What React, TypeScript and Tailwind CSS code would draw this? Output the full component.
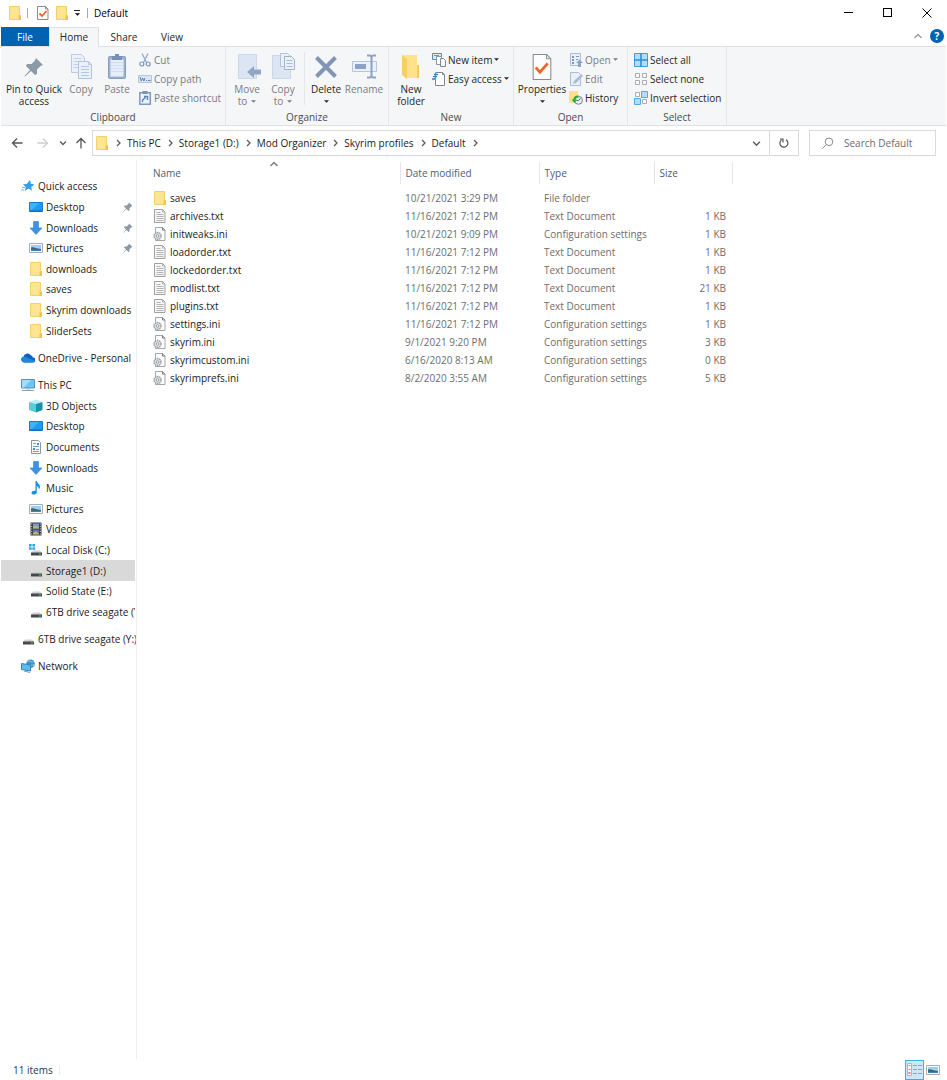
import React from 'react'

type IconProps = { className?: string }

/* ---------- Shared icons ---------- */

function Folder({ className = 'w-3.5 h-3.5' }: IconProps) {
  return (
    <svg viewBox="0 0 14 14" className={`${className} shrink-0`} aria-hidden="true">
      <path d="M1.5.5h10v9h1v4h-11z" fill="#ffe591" stroke="#f3d06c" />
      <path d="M10.5 9.5h2.5V14h-2.5z" fill="#f0c34b" />
    </svg>
  )
}

function CheckDoc({ className = 'w-7 h-7' }: IconProps) {
  return (
    <svg viewBox="4 0 20 27" className={className} aria-hidden="true">
      <path d="M5.5 1.5h13l4 4v20h-17z" fill="#fdfdfd" stroke="#8b8b8b" />
      <path d="M18.5 1.5v4h4" fill="none" stroke="#8b8b8b" />
      <path d="M8 14l4 4.500 7.500-8.500" fill="none" stroke="#ee6429" strokeWidth="2.600" />
    </svg>
  )
}

function SmallCheckDoc() {
  return (
    <svg viewBox="0 0 14 14" className="w-3.5 h-3.5" aria-hidden="true">
      <path d="M1.500.5h8l2.500 2.500v10.500H1.500z" fill="#fdfdfd" stroke="#8b8b8b" />
      <path d="M9.500.5V3H12" fill="none" stroke="#8b8b8b" />
      <path d="M3.500 7.500l2.500 2.500 4.500-5" fill="none" stroke="#ee6429" strokeWidth="1.800" />
    </svg>
  )
}

function Pin({ className = 'w-2.5 h-2.5', fill = '#8c9aa6' }: IconProps & { fill?: string }) {
  return (
    <svg viewBox="0 0 20 20" className={className} aria-hidden="true">
      <path d="M12 1l7 7-2.500 1-3.500 3.500 0 4.500-2 1-4-4-6 5.500-.5-.5L6 13 2 9l1-2h4.500L11 3.500z" fill={fill} />
    </svg>
  )
}

function Chevron({ className = 'w-[18px] h-2', dir = 'right' }: IconProps & { dir?: 'right' | 'down' | 'up' }) {
  const d = { right: 'M3 1l3 3-3 3', down: 'M1 2.500l3 3 3-3', up: 'M.5 6l3.500-3.500L7.500 6' }[dir]
  return (
    <svg viewBox="0 0 8 8" className={className} aria-hidden="true">
      <path d={d} fill="none" stroke="currentColor" strokeWidth="1.300" />
    </svg>
  )
}

function Caret({ className = 'w-[5px] h-[3px]' }: IconProps) {
  return (
    <svg viewBox="0 0 6 3" className={className} aria-hidden="true">
      <path d="M0 0h6L3 3z" fill="currentColor" />
    </svg>
  )
}

/* ---------- Ribbon icons ---------- */

const big = 'w-7 h-7'
const small = 'w-3.5 h-3.5 shrink-0'

const CopyIcon = () => (
  <svg viewBox="0 0 28 28" className={big}>
    <path d="M4.500 1.500h10l3 3v15h-13z" fill="#eaf1fa" stroke="#bccbe2" />
    <path d="M6.500 5.500h8M6.500 8.500h8M6.500 11.500h8M6.500 14.500h8" stroke="#c3d1e8" />
    <path d="M11.500 8.500h10l3 3v14h-13z" fill="#eaf1fa" stroke="#b1c2dd" />
    <path d="M21.500 8.500v3h3M14 13.500h8M14 16.500h8M14 19.500h8M14 22.500h8" fill="none" stroke="#b6c7e1" />
  </svg>
)

const PasteIcon = () => (
  <svg viewBox="0 0 28 28" className={big}>
    <rect x="5.500" y="3.500" width="17" height="22" rx="1" fill="#9db2d3" stroke="#869dc3" />
    <path d="M7.500 6.500h13v17h-13z" fill="#e6eef9" />
    <path d="M8 9.500h12M8 12.500h12M8 15.500h12M8 18.500h12" stroke="#d0ddef" />
    <path d="M9 3h3V1h4v2h3v4H9z" fill="#7790b8" />
  </svg>
)

const CutIcon = () => (
  <svg viewBox="0 0 14 14" className={small}>
    <path d="M4 .5l4.500 9M10 .5l-4.500 9" stroke="#9cadc8" strokeWidth="1.400" fill="none" />
    <circle cx="3.800" cy="11" r="2" fill="none" stroke="#7b95c0" strokeWidth="1.200" />
    <circle cx="10.200" cy="11" r="2" fill="none" stroke="#7b95c0" strokeWidth="1.200" />
  </svg>
)

const CopyPathIcon = () => (
  <svg viewBox="0 0 14 14" className={small}>
    <path d="M.5 3.500h13v7H.5z" fill="#dbe5f3" stroke="#b4c5df" />
    <path d="M2 5l1.300 4L4.600 6l1.300 3 1-3M8 8.500h1M10 8.500h2.500" fill="none" stroke="#6480ad" />
  </svg>
)

const PasteShortcutIcon = () => (
  <svg viewBox="0 0 14 14" className={small}>
    <path d="M1.800 1.800h10.500v11.500H1.800z" fill="#edf3fb" stroke="#8199c0" strokeWidth="1.500" />
    <path d="M4.500 0h5v3h-5z" fill="#7b92b9" />
    <path d="M4.500 11V9l3-2.500M6 5.500h3.500V9" fill="none" stroke="#5f7dad" strokeWidth="1.400" />
  </svg>
)

const MoveToIcon = () => (
  <svg viewBox="0 0 28 28" className={big}>
    <path d="M5.500 1.500h18v24h-18z" fill="#dbe5f3" stroke="#cbd8ea" />
    <path d="M14 19l7-6v3.500h7v5h-7V25z" fill="#91a5c5" />
  </svg>
)

const CopyToIcon = () => (
  <svg viewBox="0 0 28 28" className={big}>
    <path d="M3.500 2.500h18v23h-18z" fill="#dbe5f3" stroke="#cbd8ea" />
    <path d="M11.500.5h7l2 2v11h-9z" fill="#eaf1fa" stroke="#b1c2dd" />
    <path d="M15.500 3.500h7l3 3v10h-10z" fill="#eaf1fa" stroke="#9fb3d3" />
    <path d="M17.500 7.500h6M17.500 10.500h6M17.500 13.500h6" stroke="#a9bbd8" />
  </svg>
)

const DeleteIcon = () => (
  <svg viewBox="0 0 28 28" className={big}>
    <path d="M4.500 4.500l19 19M23.500 4.500l-19 19" stroke="#8294b5" strokeWidth="4" fill="none" />
  </svg>
)

const RenameIcon = () => (
  <svg viewBox="0 0 28 28" className={big}>
    <path d="M2.500 8.500h24v10h-24z" fill="#eaf1fa" stroke="#b4c5df" />
    <path d="M5 11h11v5H5z" fill="#8ba1c6" />
    <path d="M17 2.500h3l1.500 1 1.500-1h3M21.500 3v20M17 24.500h3l1.500-1 1.500 1h3" fill="none" stroke="#8ba1c6" strokeWidth="2" />
  </svg>
)

const NewFolderIcon = () => (
  <svg viewBox="0 0 28 28" className={big}>
    <path d="M5 2h15v16l2 1v6H8z" fill="#ffe28a" />
    <path d="M20 12h2v13h-2z" fill="#f5c95b" />
    <path d="M5 2l5 4v20l-5-4z" fill="#f7cf68" />
  </svg>
)

const NewItemIcon = () => (
  <svg viewBox="0 0 14 14" className={small}>
    <path d="M.5.5h9v6h-9z" fill="#d5ecf7" stroke="#5f8ba5" />
    <path d="M4.500 3.500h5v8h-5z" fill="#fff" stroke="#8b99a5" />
    <path d="M8.500 5.500h3l2 2v6h-5z" fill="#f7fafc" stroke="#7d8890" />
    <path d="M2 2.500h5" stroke="#4aa5d8" />
  </svg>
)

const EasyAccessIcon = () => (
  <svg viewBox="0 0 14 14" className={small}>
    <path d="M3.500.5h7l2 2v11h-9z" fill="#fff" stroke="#7f868c" />
    <path d="M10.500.5v2h2" fill="none" stroke="#7f868c" />
    <path d="M2 2.500h4M1 4.700h4M0 7h3" stroke="#2c83cf" strokeWidth="1.300" />
  </svg>
)

const OpenIcon = () => (
  <svg viewBox="0 0 14 14" className={small}>
    <path d="M1.500.5h10v12h-10z" fill="#e9f0f9" stroke="#a9bcd9" />
    <path d="M3 3h2v2H3zM3 6h2v2H3zM3 9h2v2H3zM7 3h3v1H7zM7 6h2v1H7z" fill="#7f98c2" />
    <path d="M7 10l3.500-3.500L14 10h-2v4H9v-4z" fill="#8da3c7" />
  </svg>
)

const EditIcon = () => (
  <svg viewBox="0 0 14 14" className={small}>
    <path d="M1.500.5h8l2 2v11h-10z" fill="#e9f0f9" stroke="#a9bcd9" />
    <path d="M4 12l1-3 7.500-7 1.500 2-7 7z" fill="#a8bad8" />
  </svg>
)

const HistoryIcon = () => (
  <svg viewBox="0 0 14 14" className={small}>
    <path d="M0 0h9v12H0z" fill="#ffe08a" />
    <circle cx="9.500" cy="9.300" r="4" fill="#e5e9eb" stroke="#7d858a" />
    <path d="M9.500 9.500l2-2M9.500 9.500h-2" stroke="#596368" fill="none" />
    <path d="M9.500 4.500c-4 0-5 2-5 4H2.500L5.500 12l2.500-3.500H6.500c0-1 1-2 3-2z" fill="#24ac45" />
  </svg>
)

const SelectAllIcon = () => (
  <svg viewBox="0 0 14 14" className={small}>
    <path d="M.5.5h13v13H.5z" fill="#b3defb" stroke="#3f9de0" />
    <path d="M7 0v14M0 7h14" stroke="#2f8fd8" strokeWidth="1.600" />
  </svg>
)

const SelectNoneIcon = () => (
  <svg viewBox="0 0 14 14" className={small}>
    <path d="M1.500 1.500h4v4h-4zM8.500 1.500h4v4h-4zM1.500 8.500h4v4h-4zM8.500 8.500h4v4h-4z" fill="#fcfcfc" stroke="#acacac" />
  </svg>
)

const InvertIcon = () => (
  <svg viewBox="0 0 14 14" className={small}>
    <path d="M1.500 1.500h4v4h-4zM8.500 8.500h4v4h-4z" fill="#fcfcfc" stroke="#acacac" />
    <path d="M7.500.5h6v6h-6zM.5 7.500h6v6h-6z" fill="#b3defb" stroke="#56a9e4" />
  </svg>
)

/* ---------- Navigation and file icons ---------- */

const nav = 'w-3.5 h-3.5 shrink-0'

const Star = () => (
  <svg viewBox="0 0 14 14" className={nav}>
    <path d="M9 1l.8 3.800 3.700.7-3.200 2.200.6 4L7.500 9.500 3.800 12l1-4L2 5.300l3.800-.3z" fill="#2f9fe8" />
    <path d="M1 8.500h3M0 11h3" stroke="#6fbdf0" />
  </svg>
)

const Desktop = () => (
  <svg viewBox="0 0 14 14" className={nav}>
    <path d="M.5 2.500h13v9H.5z" fill="#1c9cf2" stroke="#1679c9" />
    <path d="M1 3h9L3 10H1z" fill="#3eb2fa" />
    <path d="M1 11h12" stroke="#0c69b3" />
  </svg>
)

const Download = () => (
  <svg viewBox="0 0 14 14" className={nav}>
    <path d="M4.500.5h5V7H13l-6 6.500L1 7h3.500z" fill="#3c93e2" stroke="#2a7fd0" strokeWidth=".6" />
  </svg>
)

const Picture = () => (
  <svg viewBox="0 0 14 14" className={nav}>
    <path d="M.5 2.500h13v9H.5z" fill="#fafafa" stroke="#a8adb1" />
    <path d="M2 4h10v6H2z" fill="#9dcff2" />
    <path d="M2 6.500c3-1 4 .8 10 1.500v1H2z" fill="#3e6b7c" />
    <path d="M2 9h10v1H2z" fill="#4b80b4" />
  </svg>
)

const OneDrive = () => (
  <svg viewBox="0 0 14 14" className={nav}>
    <path d="M3 11.500a3 3 0 01-.5-5.800A4 4 0 019.500 4 3.500 3.500 0 0112 6.500a2.500 2.500 0 01-.5 5z" fill="#0f62b8" />
    <path d="M3 11.500a3 3 0 01-1.500-5.500C5 5 7 7.500 13.500 9.500a2 2 0 01-2 2z" fill="#1c87de" />
  </svg>
)

const ThisPC = () => (
  <svg viewBox="0 0 14 14" className={nav}>
    <path d="M.5 1.500h13v8.500H.5z" fill="#6cc4f8" stroke="#5b8fb5" />
    <path d="M1 2h9L3 9.500H1z" fill="#a3dcfc" />
    <path d="M5 10.500h4v1H5z" fill="#a9b9c4" />
    <path d="M1 12.500h12" stroke="#8ba0b1" />
  </svg>
)

const Cube = () => (
  <svg viewBox="0 0 14 14" className={nav}>
    <path d="M0 3l7-2.500L13.500 3 7 5z" fill="#b8eef3" />
    <path d="M0 3l7 2v8.500L0 11z" fill="#57cddb" />
    <path d="M13.500 3L7 5v8.500L13.500 11z" fill="#1593a9" />
  </svg>
)

const Document = () => (
  <svg viewBox="0 0 14 14" className={nav}>
    <path d="M2.500.5h7l2 2v11h-9z" fill="#fbfcfd" stroke="#8e979e" />
    <path d="M4 3.500h3M4 6.500h6M7 9.500h3M4 11.500h6" stroke="#75a0be" />
    <path d="M8 3h2v2H8zM4 8h2v2H4z" fill="#3b8fc6" />
  </svg>
)

const Music = () => (
  <svg viewBox="0 0 14 14" className={nav}>
    <path d="M6.500 0h1.300c.2 2.500 3.700 3.200 3.200 6.500-.3 1-.8 1.600-1.200 2 .3-2.300-.8-3-2-3.500v6.500c-.3 2.500-5 2.800-5.300.5 0-2 2.500-2.500 4-2z" fill="#1590e6" />
  </svg>
)

const Video = () => (
  <svg viewBox="0 0 14 14" className={nav}>
    <path d="M1.500.5h11v13h-11z" fill="#373d44" />
    <path d="M4 1.500h6v5H4z" fill="#6b9fd6" />
    <path d="M4 7.500h6v5H4z" fill="#4b74b6" />
    <path d="M4 5l2.500-1.500L10 6v.5H4zM4 11l3-2 3 3v.5H4z" fill="#cfae62" />
    <path d="M2.700 1.500v12M11.300 1.500v12" stroke="#d7dde2" strokeDasharray="1 1.500" />
  </svg>
)

const Drive = ({ system }: { system?: boolean }) => (
  <svg viewBox="0 0 14 14" className={nav}>
    <path d="M4 7.500h7l2 2.500H2z" fill="#cfd1d3" />
    <path d="M2 9.500h11v3H2z" fill="#45494c" />
    <path d="M10 10.500h2v1h-2z" fill="#49d660" />
    {system && <path d="M0 1h2.700v2.500H0zM3.400 1h2.700v2.500H3.400zM0 4.200h2.700v2.500H0zM3.400 4.200h2.700v2.500H3.400z" fill="#20aef0" />}
  </svg>
)

const Network = () => (
  <svg viewBox="0 0 14 14" className={nav}>
    <circle cx="9.500" cy="4.800" r="4.300" fill="#3f93c7" />
    <path d="M6.500 2.500c2-1.500 3.500 1 5.500.5M9 8c1-2 2-2 4-2" stroke="#8fd0ee" fill="none" />
    <path d="M.5 4.500l9 1.500v6l-9-1.500z" fill="#5bbcf2" stroke="#3883b3" />
    <path d="M3 12l6 1.500" stroke="#7f97a6" fill="none" />
  </svg>
)

const TextFile = () => (
  <svg viewBox="0 0 14 14" className={nav}>
    <path d="M1.500.5h8l2.500 2.500v10.500H1.500z" fill="#f6f6f6" stroke="#a0a0a0" />
    <path d="M9.500.5V3H12M3.500 3.500h4M3.500 5.500h7M3.500 7.500h7M3.500 9.500h7M3.500 11.500h7" fill="none" stroke="#b5b5b5" />
  </svg>
)

const IniFile = () => (
  <svg viewBox="0 0 14 14" className={nav}>
    <path d="M2.500.5h7L12 3v10.500H2.500z" fill="#fcfcfc" stroke="#a5a5a5" />
    <path d="M9.500.5V3H12" fill="none" stroke="#777" />
    <circle cx="4.500" cy="9" r="3.500" fill="#dfe2e4" stroke="#9aa1a7" strokeDasharray="1.600 .6" strokeWidth="1.400" />
    <circle cx="4.500" cy="9" r="1.300" fill="#fff" stroke="#959ca2" />
  </svg>
)

/* ---------- Ribbon ---------- */

function BigButton({ icon, lines, width = 'w-9', muted, caret }: {
  icon: React.ReactNode
  lines: string[]
  width?: string
  muted?: boolean
  caret?: 'inline' | 'below'
}) {
  return (
    <button type="button" className={`${width} shrink-0 flex flex-col items-center pt-[5px] leading-3 whitespace-nowrap ${muted ? 'text-[#7c7c7c]' : 'text-[#262626]'}`}>
      {icon}
      <span className="pt-0.5">{lines[0]}</span>
      {lines[1] && (
        <span className="flex items-center gap-1">
          {lines[1]}
          {caret === 'inline' && <Caret />}
        </span>
      )}
      {caret === 'below' && <span className="h-3 flex items-center"><Caret /></span>}
    </button>
  )
}

function SmallButton({ icon, label, muted, caret }: { icon: React.ReactNode; label: string; muted?: boolean; caret?: boolean }) {
  return (
    <button type="button" className={`h-[19px] flex items-center gap-0.5 whitespace-nowrap ${muted ? 'text-[#7c7c7c]' : 'text-[#262626]'}`}>
      {icon}
      <span>{label}</span>
      {caret && <Caret />}
    </button>
  )
}

function Group({ label, width, children }: { label: string; width: string; children: React.ReactNode }) {
  return (
    <section aria-label={label} className={`${width} shrink-0 border-r border-[#e4e6e8] flex flex-col pt-px`}>
      <div className="flex h-[61px]">{children}</div>
      <div className="text-center leading-4 text-[#4c4c4c]">{label}</div>
    </section>
  )
}

function Ribbon() {
  return (
    <div className="flex bg-[#f4f6f8] border-y border-[#dfe1e3] h-20 overflow-hidden">
      <Group label="Clipboard" width="w-[225px]">
        <div className="flex pl-1">
          <BigButton width="w-[58px]" icon={<span className="w-7 h-7 flex items-center justify-center"><Pin className="w-5 h-5" /></span>} lines={['Pin to Quick', 'access']} />
          <BigButton icon={<CopyIcon />} lines={['Copy']} muted />
          <BigButton icon={<PasteIcon />} lines={['Paste']} muted />
        </div>
        <div className="flex flex-col pl-[3px] pt-0.5">
          <SmallButton icon={<CutIcon />} label="Cut" muted />
          <SmallButton icon={<CopyPathIcon />} label="Copy path" muted />
          <SmallButton icon={<PasteShortcutIcon />} label="Paste shortcut" muted />
        </div>
      </Group>

      <Group label="Organize" width="w-[163px]">
        <div className="flex pl-[3px]">
          <BigButton icon={<MoveToIcon />} lines={['Move', 'to']} caret="inline" muted />
          <BigButton icon={<CopyToIcon />} lines={['Copy', 'to']} caret="inline" muted />
        </div>
        <div className="w-px bg-[#e4e6e8] mx-[3px] my-1" />
        <BigButton icon={<DeleteIcon />} lines={['Delete']} caret="below" />
        <BigButton width="w-10" icon={<RenameIcon />} lines={['Rename']} muted />
      </Group>

      <Group label="New" width="w-[125px]">
        <div className="flex pl-1">
          <BigButton icon={<NewFolderIcon />} lines={['New', 'folder']} />
        </div>
        <div className="flex flex-col pl-[3px] pt-0.5">
          <SmallButton icon={<NewItemIcon />} label="New item" caret />
          <SmallButton icon={<EasyAccessIcon />} label="Easy access" caret />
        </div>
      </Group>

      <Group label="Open" width="w-[114px]">
        <div className="flex pl-1">
          <BigButton width="w-12" icon={<CheckDoc />} lines={['Properties']} caret="below" />
        </div>
        <div className="flex flex-col pl-[3px] pt-0.5">
          <SmallButton icon={<OpenIcon />} label="Open" muted caret />
          <SmallButton icon={<EditIcon />} label="Edit" muted />
          <SmallButton icon={<HistoryIcon />} label="History" />
        </div>
      </Group>

      <Group label="Select" width="w-[99px]">
        <div className="flex flex-col pl-1.5 pt-0.5">
          <SmallButton icon={<SelectAllIcon />} label="Select all" />
          <SmallButton icon={<SelectNoneIcon />} label="Select none" />
          <SmallButton icon={<InvertIcon />} label="Invert selection" />
        </div>
      </Group>
    </div>
  )
}

/* ---------- Title bar, tabs and address bar ---------- */

function TitleBar() {
  return (
    <header className="h-[27px] flex items-center pb-0.5">
      <div className="flex items-center pl-[7px]">
        <Folder />
        <span className="w-px h-2.5 bg-[#a8a8a8] ml-[5px] mr-2" />
        <button type="button" aria-label="Properties"><SmallCheckDoc /></button>
        <button type="button" aria-label="New folder" className="ml-[5px]"><Folder /></button>
        <button type="button" aria-label="Customize Quick Access Toolbar" className="ml-1 w-2 flex flex-col items-center gap-0.5">
          <span className="w-1.5 h-px bg-[#222]" />
          <Caret />
        </button>
        <span className="w-px h-2.5 bg-[#a8a8a8] mx-1.5" />
      </div>
      <h1 className="text-black">Default</h1>
      <div className="ml-auto flex h-full text-black">
        <button type="button" aria-label="Minimize" className="w-[39px] flex items-center justify-center"><span className="w-[9px] h-px bg-black" /></button>
        <button type="button" aria-label="Maximize" className="w-[39px] flex items-center justify-center"><span className="w-[9px] h-[9px] border border-black" /></button>
        <button type="button" aria-label="Close" className="w-[39px] flex items-center justify-center">
          <svg viewBox="0 0 10 10" className="w-2.5 h-2.5"><path d="M.5.5l9 9M9.500.5l-9 9" stroke="#000" /></svg>
        </button>
      </div>
    </header>
  )
}

function Tabs() {
  return (
    <nav className="h-[19px] flex items-stretch text-[#262626]">
      <button type="button" className="w-12 bg-[#0063b1] text-white">File</button>
      <button type="button" className="w-[50px] bg-[#f4f6f8] border-x border-t border-[#dfe1e3] relative -mb-px pb-0.5">Home</button>
      <button type="button" className="w-[50px]">Share</button>
      <button type="button" className="w-[46px]">View</button>
      <div className="ml-auto flex items-center gap-2 pr-0.5 pb-px">
        <button type="button" aria-label="Minimize the Ribbon" className="text-[#9a9a9a]"><Chevron dir="up" className="w-2 h-2" /></button>
        <button type="button" aria-label="Help" className="w-3.5 h-3.5 rounded-full bg-[#0063b1] text-white font-bold leading-[14px]">?</button>
      </div>
    </nav>
  )
}

const crumbs = ['This PC', 'Storage1 (D:)', 'Mod Organizer', 'Skyrim profiles', 'Default']

function AddressBar() {
  return (
    <div className="flex items-center h-[34px] pr-2.5 text-[#5c5c5c]">
      <div className="w-[91px] flex items-center pl-2.5">
        <button type="button" aria-label="Back">
          <svg viewBox="0 0 12 12" className="w-3 h-3"><path d="M11.500 6h-10M6 1.500L1.500 6 6 10.500" fill="none" stroke="#555" strokeWidth="1.300" /></svg>
        </button>
        <button type="button" aria-label="Forward" className="ml-3.5">
          <svg viewBox="0 0 12 12" className="w-3 h-3"><path d="M.5 6h10M6 1.500L10.500 6 6 10.500" fill="none" stroke="#cdcdcd" strokeWidth="1.300" /></svg>
        </button>
        <button type="button" aria-label="Recent locations" className="ml-2.5"><Chevron dir="down" className="w-2 h-2" /></button>
        <button type="button" aria-label="Up" className="ml-2">
          <svg viewBox="0 0 12 12" className="w-3 h-3"><path d="M6 11.500v-10M1.500 6L6 1.500 10.500 6" fill="none" stroke="#555" strokeWidth="1.300" /></svg>
        </button>
      </div>
      <div className="flex-1 flex items-center h-[26px] border border-[#d9d9d9] pl-0.5">
        <Folder />
        <Chevron />
        {crumbs.map((name) => (
          <React.Fragment key={name}>
            <button type="button" className="text-[#1a1a1a] whitespace-nowrap">{name}</button>
            <Chevron />
          </React.Fragment>
        ))}
        <button type="button" aria-label="Previous locations" className="ml-auto mr-2"><Chevron dir="down" className="w-[9px] h-[9px]" /></button>
        <button type="button" aria-label="Refresh" className="w-[29px] h-full border-l border-[#d9d9d9] flex items-center justify-center">
          <svg viewBox="0 0 12 12" className="w-3 h-3"><path d="M3.500 3A4 4 0 108 2.800M2 2h3v3.500" fill="none" stroke="#555" strokeWidth="1.200" /></svg>
        </button>
      </div>
      <label className="ml-2.5 w-[127px] h-[26px] border border-[#d9d9d9] flex items-center pl-3">
        <svg viewBox="0 0 12 12" className="w-3 h-3 shrink-0"><circle cx="7" cy="4.800" r="3.800" fill="none" stroke="#8a8a8a" /><path d="M4.300 7.500L.5 11.500" stroke="#8a8a8a" /></svg>
        <input type="search" aria-label="Search Default" placeholder="Search Default" className="w-full ml-2.5 bg-transparent outline-none placeholder:text-[#6b6b6b]" />
      </label>
    </div>
  )
}

/* ---------- Navigation pane ---------- */

type NavItem = { name: string; icon: React.ReactNode; pinned?: boolean; selected?: boolean }

const quickAccess: NavItem[] = [
  { name: 'Quick access', icon: <Star /> },
  { name: 'Desktop', icon: <Desktop />, pinned: true },
  { name: 'Downloads', icon: <Download />, pinned: true },
  { name: 'Pictures', icon: <Picture />, pinned: true },
  { name: 'downloads', icon: <Folder /> },
  { name: 'saves', icon: <Folder /> },
  { name: 'Skyrim downloads', icon: <Folder /> },
  { name: 'SliderSets', icon: <Folder /> },
]

const thisPC: NavItem[] = [
  { name: 'This PC', icon: <ThisPC /> },
  { name: '3D Objects', icon: <Cube /> },
  { name: 'Desktop', icon: <Desktop /> },
  { name: 'Documents', icon: <Document /> },
  { name: 'Downloads', icon: <Download /> },
  { name: 'Music', icon: <Music /> },
  { name: 'Pictures', icon: <Picture /> },
  { name: 'Videos', icon: <Video /> },
  { name: 'Local Disk (C:)', icon: <Drive system /> },
  { name: 'Storage1 (D:)', icon: <Drive />, selected: true },
  { name: 'Solid State (E:)', icon: <Drive /> },
  { name: '6TB drive seagate (Y:)', icon: <Drive /> },
]

function NavGroup({ items, height }: { items: NavItem[]; height: string }) {
  return (
    <ul className={`${height} grid auto-rows-fr ${items.length > 1 ? 'overflow-hidden' : ''}`}>
      {items.map((item, i) => (
        <li key={item.name} className={item.selected ? 'bg-[#d9d9d9]' : ''}>
          <a href="#" className={`h-full flex items-center gap-[3px] whitespace-nowrap ${i === 0 ? 'pl-5' : 'pl-7'}`}>
            {item.icon}
            <span>{item.name}</span>
            {item.pinned && <Pin className="w-2.5 h-2.5 ml-auto mr-0.5" />}
          </a>
        </li>
      ))}
    </ul>
  )
}

function NavPane() {
  return (
    <nav aria-label="Navigation pane" className="w-[134px] shrink-0 pt-4 flex flex-col gap-[7px] text-[#1a1a1a]">
      <NavGroup items={quickAccess} height="h-[165px]" />
      <NavGroup items={[{ name: 'OneDrive - Personal', icon: <OneDrive /> }]} height="h-5" />
      <NavGroup items={thisPC} height="h-[247px]" />
      <NavGroup items={[{ name: '6TB drive seagate (Y:)', icon: <Drive /> }]} height="h-5" />
      <NavGroup items={[{ name: 'Network', icon: <Network /> }]} height="h-5" />
    </nav>
  )
}

/* ---------- File list ---------- */

const files = [
  { name: 'saves', date: '10/21/2021 3:29 PM', type: 'File folder', size: '' },
  { name: 'archives.txt', date: '11/16/2021 7:12 PM', type: 'Text Document', size: '1 KB' },
  { name: 'initweaks.ini', date: '10/21/2021 9:09 PM', type: 'Configuration settings', size: '1 KB' },
  { name: 'loadorder.txt', date: '11/16/2021 7:12 PM', type: 'Text Document', size: '1 KB' },
  { name: 'lockedorder.txt', date: '11/16/2021 7:12 PM', type: 'Text Document', size: '1 KB' },
  { name: 'modlist.txt', date: '11/16/2021 7:12 PM', type: 'Text Document', size: '21 KB' },
  { name: 'plugins.txt', date: '11/16/2021 7:12 PM', type: 'Text Document', size: '1 KB' },
  { name: 'settings.ini', date: '11/16/2021 7:12 PM', type: 'Configuration settings', size: '1 KB' },
  { name: 'skyrim.ini', date: '9/1/2021 9:20 PM', type: 'Configuration settings', size: '3 KB' },
  { name: 'skyrimcustom.ini', date: '6/16/2020 8:13 AM', type: 'Configuration settings', size: '0 KB' },
  { name: 'skyrimprefs.ini', date: '8/2/2020 3:55 AM', type: 'Configuration settings', size: '5 KB' },
]

function fileIcon(type: string) {
  if (type === 'File folder') return <Folder />
  return type === 'Text Document' ? <TextFile /> : <IniFile />
}

function FileList() {
  return (
    <main className="flex-1 border-l border-[#f0f0f0] ml-px pt-0.5">
      <table className="table-fixed w-full border-collapse text-left">
        <thead>
          <tr className="h-[22px] text-[#4c607a]">
            <th className="w-[263px] font-normal pl-4 border-r border-[#e5e5e5] relative">
              Name
              <span className="absolute top-0 left-[133px] text-[#777]"><Chevron dir="up" className="w-2 h-2 -mt-0.5" /></span>
            </th>
            <th className="w-[139px] font-normal pl-[5px] border-r border-[#e5e5e5]">Date modified</th>
            <th className="w-[115px] font-normal pl-[5px] border-r border-[#e5e5e5]">Type</th>
            <th className="w-[78px] font-normal pl-[5px] border-r border-[#e5e5e5]">Size</th>
            <th aria-hidden="true" />
          </tr>
        </thead>
        <tbody className="text-[#6d6d6d] before:block before:h-[5px]">
          {files.map((file) => (
            <tr key={file.name} className="h-[18px]">
              <td className="pl-4">
                <span className="flex items-center gap-[3px] text-[#1a1a1a]">
                  {fileIcon(file.type)}
                  {file.name}
                </span>
              </td>
              <td className="pl-[5px]">{file.date}</td>
              <td className="pl-[5px]">{file.type}</td>
              <td className="pr-1.5 text-right">{file.size}</td>
              <td />
            </tr>
          ))}
        </tbody>
      </table>
    </main>
  )
}

function StatusBar() {
  return (
    <footer className="h-[21px] flex items-center pl-3 pr-1.5 text-[#1e395b]">
      <span>11 items</span>
      <span className="w-px h-2.5 bg-[#ececec] ml-1.5" />
      <div className="ml-auto flex items-center gap-0.5">
        <button type="button" aria-label="Details view" className="w-[19px] h-5 border border-[#3fb0e0] bg-[#cce8f6] flex items-center justify-center">
          <svg viewBox="0 0 15 13" className="w-[15px] h-[13px]">
            <path d="M.5.5h4v12h-4z" fill="#f7f7f7" stroke="#b5b5b5" />
            <path d="M1.500 2.500h2M1.500 6.500h2" stroke="#999" />
            <path d="M1.500 10h2" stroke="#d8604e" strokeWidth="1.500" />
            <path d="M6 2.500h4M11 2.500h4M6 6.500h4M11 6.500h4M6 10.500h4M11 10.500h4" stroke="#9ba1a6" />
          </svg>
        </button>
        <button type="button" aria-label="Large icons view"><Picture /></button>
      </div>
    </footer>
  )
}

export default function App() {
  return (
    <div className="min-h-screen flex flex-col bg-white px-px text-[10px] leading-[14px] font-['Open_Sans','Noto_Sans',sans-serif]">
      <TitleBar />
      <Tabs />
      <Ribbon />
      <AddressBar />
      <div className="flex-1 flex">
        <NavPane />
        <FileList />
      </div>
      <StatusBar />
    </div>
  )
}
